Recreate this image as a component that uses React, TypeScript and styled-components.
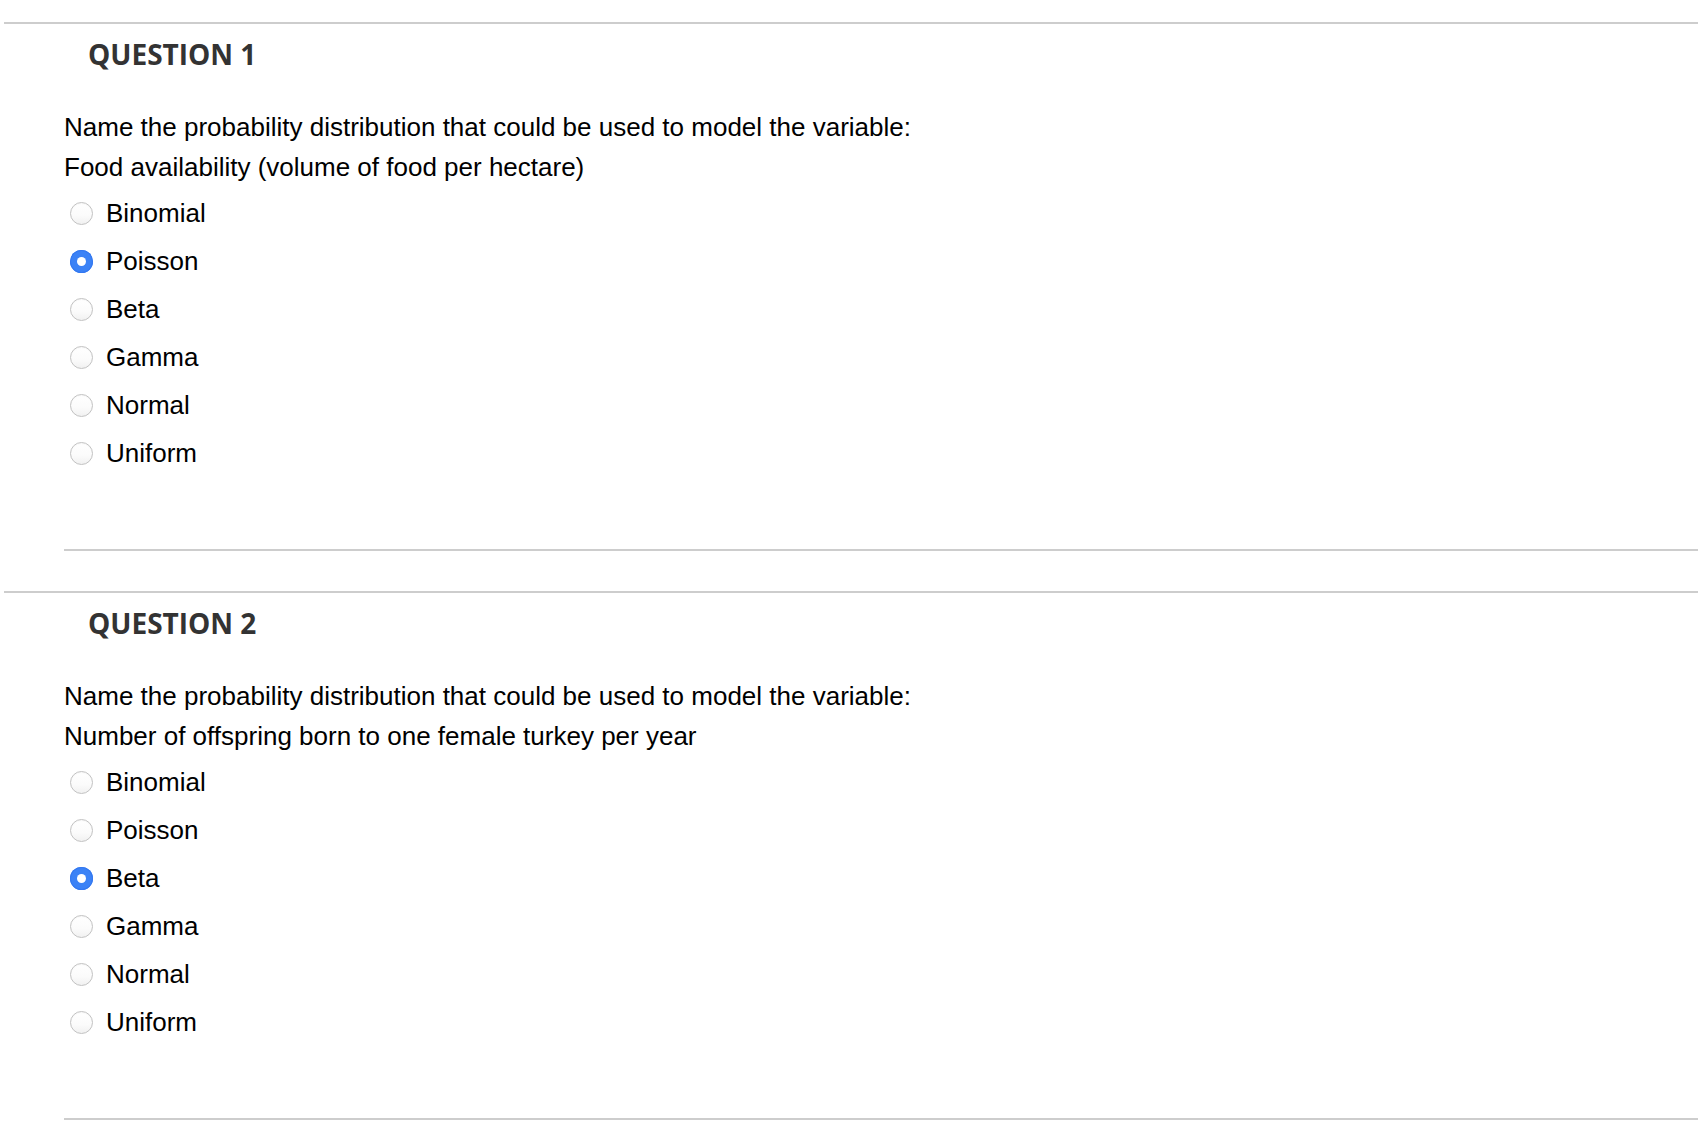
import styled, { createGlobalStyle } from "styled-components";

const GlobalStyle = createGlobalStyle`
	html, body {
		margin: 0;
		padding: 0;
		background: #ffffff;
	}
	body {
		font-family: "Liberation Sans", Arial, sans-serif;
		color: #000;
	}
`;

type questionType = {
	number: number;
	prompt: string;
	variable: string;
	selected: string;
};

const options = ["Binomial", "Poisson", "Beta", "Gamma", "Normal", "Uniform"];

const questions: questionType[] = [
	{
		number: 1,
		prompt: "Name the probability distribution that could be used to model the variable:",
		variable: "Food availability (volume of food per hectare)",
		selected: "Poisson",
	},
	{
		number: 2,
		prompt: "Name the probability distribution that could be used to model the variable:",
		variable: "Number of offspring born to one female turkey per year",
		selected: "Beta",
	},
];

function Question({ question }: { question: questionType }) {
	return (
		<Section>
			<Heading>QUESTION {question.number}</Heading>
			<Body>
				<Prompt>
					{question.prompt}
					<br />
					{question.variable}
				</Prompt>
				<OptionList>
					{options.map((option) => (
						<OptionRow key={option}>
							<Radio $checked={option === question.selected} />
							<Label>{option}</Label>
						</OptionRow>
					))}
				</OptionList>
				<Divider />
			</Body>
		</Section>
	);
}

function App() {
	return (
		<>
			<GlobalStyle />
			<Page>
				{questions.map((question) => (
					<Question key={question.number} question={question} />
				))}
			</Page>
		</>
	);
}

export default App;

const Page = styled.div`
	padding: 22px 0 0 4px;
	display: flex;
	flex-direction: column;
	gap: 40px;
`;

const Section = styled.section`
	border-top: 2px solid #cdcdcd;
	display: flex;
	flex-direction: column;
`;

const Heading = styled.h2`
	margin: 11px 0 0 84px;
	font-family: "Open Sans", sans-serif;
	font-size: 28px;
	font-weight: 700;
	color: #333333;
	letter-spacing: 0;
`;

const Body = styled.div`
	padding-left: 60px;
	margin-top: 34px;
`;

const Prompt = styled.p`
	margin: 0;
	font-size: 26px;
	line-height: 40px;
	color: #000;
`;

const OptionList = styled.div`
	display: flex;
	flex-direction: column;
	margin-top: 2px;
`;

const OptionRow = styled.label`
	display: flex;
	align-items: center;
	height: 48px;
	gap: 13px;
	cursor: pointer;
`;

const Radio = styled.span<{ $checked: boolean }>`
	box-sizing: border-box;
	margin-left: 6px;
	width: 23px;
	height: 23px;
	border-radius: 50%;
	flex-shrink: 0;
	display: flex;
	align-items: center;
	justify-content: center;
	border: ${(p) => (p.$checked ? "none" : "1px solid #c2c2c2")};
	background: ${(p) =>
		p.$checked
			? "#3b82f6"
			: "linear-gradient(180deg, #ffffff 0%, #fbfbfb 60%, #f1f1f1 100%)"};
	box-shadow: ${(p) => (p.$checked ? "inset 0 0 0 1px #3478f0" : "inset 0 1px 1px rgba(0,0,0,0.03)")};

	&::after {
		content: "";
		display: ${(p) => (p.$checked ? "block" : "none")};
		width: 9px;
		height: 9px;
		border-radius: 50%;
		background: #ffffff;
	}
`;

const Label = styled.span`
	font-size: 26px;
	color: #000;
`;

const Divider = styled.hr`
	margin: 72px 0 0;
	border: none;
	border-top: 2px solid #cdcdcd;
	height: 0;
`;
